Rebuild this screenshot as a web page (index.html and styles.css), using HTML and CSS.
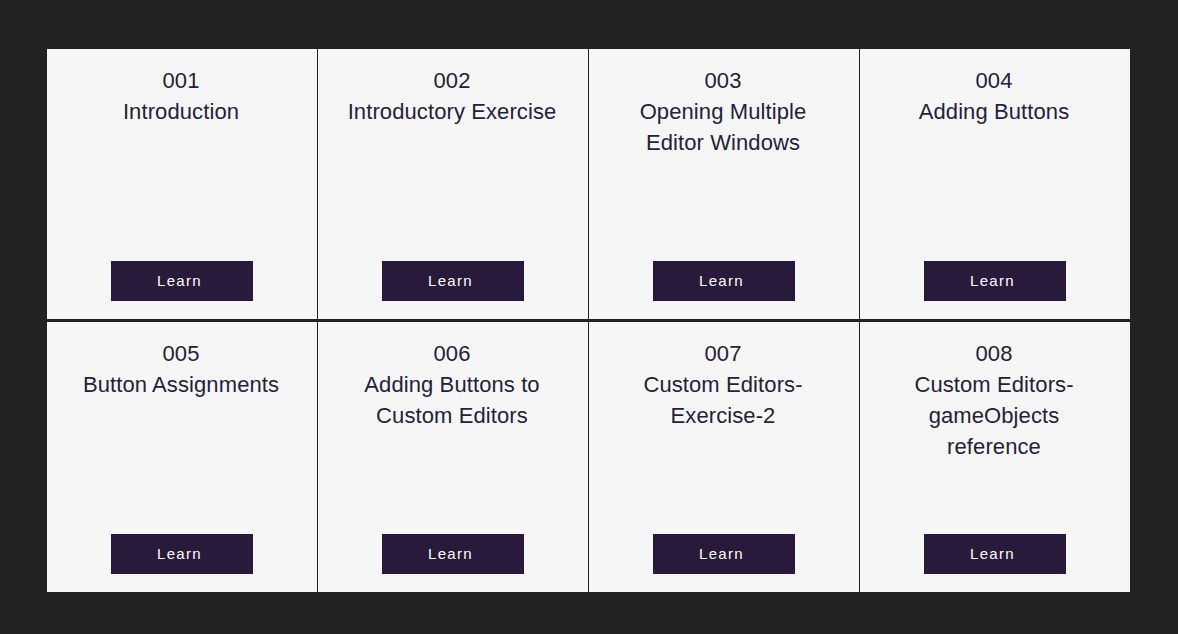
FILE: index.html
```html
<!DOCTYPE html>
<html>
<head>
<meta charset="utf-8">
<link rel="stylesheet" href="styles.css">
</head>
<body>
<div class="grid">
  <div class="card"><div class="title">001<br>Introduction</div><a class="btn">Learn</a></div>
  <div class="card"><div class="title">002<br>Introductory Exercise</div><a class="btn">Learn</a></div>
  <div class="card"><div class="title">003<br>Opening Multiple<br>Editor Windows</div><a class="btn">Learn</a></div>
  <div class="card"><div class="title">004<br>Adding Buttons</div><a class="btn">Learn</a></div>
  <div class="card"><div class="title">005<br>Button Assignments</div><a class="btn">Learn</a></div>
  <div class="card"><div class="title">006<br>Adding Buttons to<br>Custom Editors</div><a class="btn">Learn</a></div>
  <div class="card"><div class="title">007<br>Custom Editors-<br>Exercise-2</div><a class="btn">Learn</a></div>
  <div class="card"><div class="title">008<br>Custom Editors-<br>gameObjects<br>reference</div><a class="btn">Learn</a></div>
</div>
</body>
</html>
```
FILE: styles.css
```css
html, body {
  margin: 0;
  padding: 0;
  background: #232222;
}
body {
  padding: 49px 0 0 47px;
  font-family: "Liberation Sans", Arial, sans-serif;
}
.grid {
  display: grid;
  grid-template-columns: repeat(4, 270px);
  grid-auto-rows: 270px;
  gap: 3px 1px;
  width: 1083px;
}
.card {
  background: #f6f6f6;
  display: flex;
  flex-direction: column;
  align-items: center;
  justify-content: space-between;
  padding: 16px 0 18px;
  box-sizing: border-box;
}
.title {
  color: #26213a;
  font-size: 22px;
  line-height: 31px;
  letter-spacing: 0.1px;
  text-align: center;
  padding-right: 2px;
}
.btn {
  display: flex;
  align-items: center;
  justify-content: center;
  width: 142px;
  height: 40px;
  box-sizing: border-box;
  padding: 0 5px 2px 0;
  background: #29193b;
  color: #ffffff;
  font-size: 15px;
  letter-spacing: 1.3px;
}
```
